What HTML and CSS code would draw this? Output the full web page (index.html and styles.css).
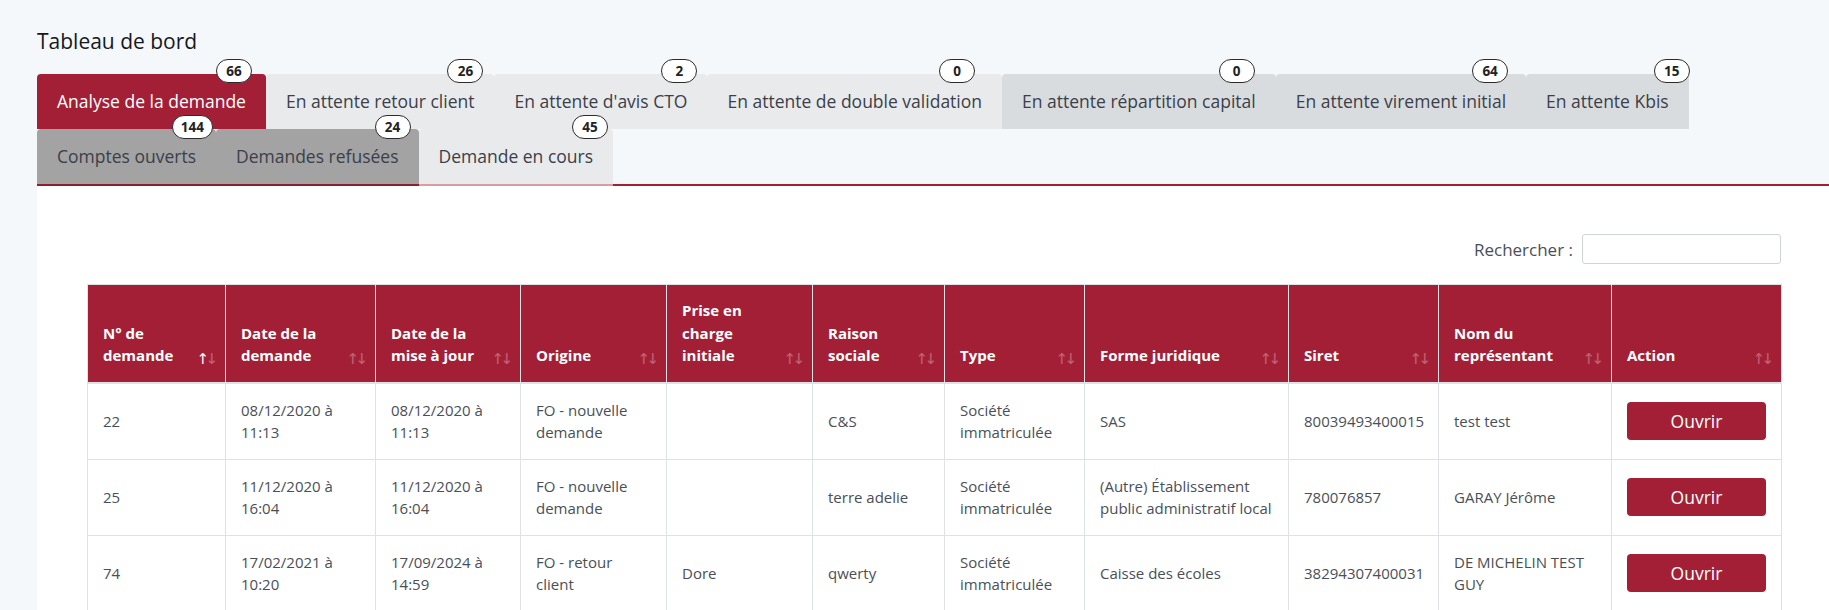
FILE: index.html
```html
<!DOCTYPE html>
<html lang="fr">
<head>
<meta charset="utf-8">
<title>Tableau de bord</title>
<link rel="stylesheet" href="styles.css">
</head>
<body>
<div class="page">
  <h1 class="title">Tableau de bord</h1>
  <nav class="tabs">
    <a class="tab tab-active">Analyse de la demande<span class="badge">66</span></a>
    <a class="tab">En attente retour client<span class="badge">26</span></a>
    <a class="tab">En attente d'avis CTO<span class="badge">2</span></a>
    <a class="tab">En attente de double validation<span class="badge">0</span></a>
    <a class="tab tab-mid">En attente répartition capital<span class="badge">0</span></a>
    <a class="tab tab-mid">En attente virement initial<span class="badge">64</span></a>
    <a class="tab tab-mid">En attente Kbis<span class="badge">15</span></a>
    <a class="tab tab-dark">Comptes ouverts<span class="badge">144</span></a>
    <a class="tab tab-dark">Demandes refusées<span class="badge">24</span></a>
    <a class="tab tab-current">Demande en cours<span class="badge">45</span></a>
  </nav>
  <section class="panel">
    <div class="toolbar">
      <label class="search">Rechercher :<input class="search-input" type="search"></label>
    </div>
    <table class="grid">
      <colgroup>
        <col class="c1"><col class="c2"><col class="c3"><col class="c4"><col class="c5"><col class="c6"><col class="c7"><col class="c8"><col class="c9"><col class="c10"><col class="c11">
      </colgroup>
      <thead>
        <tr>
          <th class="sort sort-asc">N° de demande</th>
          <th class="sort">Date de la demande</th>
          <th class="sort">Date de la mise à jour</th>
          <th class="sort">Origine</th>
          <th class="sort">Prise en charge initiale</th>
          <th class="sort">Raison sociale</th>
          <th class="sort">Type</th>
          <th class="sort">Forme juridique</th>
          <th class="sort">Siret</th>
          <th class="sort">Nom du représentant</th>
          <th class="sort">Action</th>
        </tr>
      </thead>
      <tbody>
        <tr>
          <td>22</td>
          <td>08/12/2020 à 11:13</td>
          <td>08/12/2020 à 11:13</td>
          <td>FO - nouvelle demande</td>
          <td></td>
          <td>C&amp;S</td>
          <td>Société immatriculée</td>
          <td>SAS</td>
          <td>80039493400015</td>
          <td>test test</td>
          <td><button class="btn-open" type="button">Ouvrir</button></td>
        </tr>
        <tr>
          <td>25</td>
          <td>11/12/2020 à 16:04</td>
          <td>11/12/2020 à 16:04</td>
          <td>FO - nouvelle demande</td>
          <td></td>
          <td>terre adelie</td>
          <td>Société immatriculée</td>
          <td>(Autre) Établissement public administratif local</td>
          <td>780076857</td>
          <td>GARAY Jérôme</td>
          <td><button class="btn-open" type="button">Ouvrir</button></td>
        </tr>
        <tr>
          <td>74</td>
          <td>17/02/2021 à 10:20</td>
          <td>17/09/2024 à 14:59</td>
          <td>FO - retour client</td>
          <td>Dore</td>
          <td>qwerty</td>
          <td>Société immatriculée</td>
          <td>Caisse des écoles</td>
          <td>38294307400031</td>
          <td>DE MICHELIN TEST GUY</td>
          <td><button class="btn-open" type="button">Ouvrir</button></td>
        </tr>
      </tbody>
    </table>
  </section>
</div>
</body>
</html>
```
FILE: styles.css
```css
html, body {
  margin: 0;
  padding: 0;
}

body {
  background: #f5f8fb;
  font-family: "Open Sans", "Liberation Sans", sans-serif;
  color: #3b4049;
}

.page {
  padding: 27px 0 0 37px;
}

.title {
  margin: 0 0 19px;
  font-size: 21px;
  font-weight: 400;
  line-height: 28px;
  color: #16181b;
}

.tabs {
  display: flex;
  flex-wrap: wrap;
  align-items: flex-start;
  border-bottom: 2px solid #a31f36;
}

.tab {
  position: relative;
  padding: 15px 20px;
  font-size: 17.5px;
  line-height: 25px;
  white-space: nowrap;
  color: #3b4049;
  background: #e9eaec;
  border-radius: 4px 4px 0 0;
}

.tab-active {
  background: #a31f36;
  color: #fff;
}

.tab-mid {
  background: #d9dcdf;
}

.tab-dark {
  background: #a3a3a3;
  border-bottom: 2px solid #8d1f30;
  margin-bottom: -2px;
}

.tab-current {
  background: #e9eaec;
  border-bottom: 2px solid #dc9ba4;
  margin-bottom: -2px;
}

.badge {
  position: absolute;
  top: -15px;
  right: 12px;
  box-sizing: border-box;
  height: 24px;
  min-width: 36px;
  padding: 0 8px;
  border: 1px solid #2b2b2b;
  border-radius: 12px;
  background: #fff;
  color: #222;
  font-size: 13.5px;
  font-weight: 700;
  line-height: 22px;
  text-align: center;
}

.tab:nth-child(1) .badge { right: 14px; }
.tab:nth-child(2) .badge { right: 11px; }
.tab:nth-child(3) .badge { right: 10px; }
.tab:nth-child(4) .badge { right: 27px; }
.tab:nth-child(5) .badge { right: 21px; }
.tab:nth-child(6) .badge { right: 18px; }
.tab:nth-child(7) .badge { right: -1px; }
.tab:nth-child(8) .badge { right: 3px; top: -14px; }
.tab:nth-child(9) .badge { right: 8px; top: -14px; }
.tab:nth-child(10) .badge { right: 5px; top: -14px; }

.panel {
  background: #fff;
  padding: 48px 48px 40px 50px;
  min-height: 400px;
}

.toolbar {
  display: flex;
  justify-content: flex-end;
  margin-bottom: 20px;
}

.search {
  display: flex;
  align-items: center;
  gap: 9px;
  font-size: 17px;
  color: #4a4f57;
}

.search-input {
  box-sizing: border-box;
  width: 199px;
  height: 30px;
  margin: 0;
  border: 1px solid #ced4da;
  border-radius: 3px;
  background: #fff;
}

.grid {
  width: 100%;
  border-collapse: collapse;
  table-layout: fixed;
  font-size: 15px;
  line-height: 1.5;
  color: #4a4f57;
}

.c1 { width: 138px; }
.c2 { width: 150px; }
.c3 { width: 145px; }
.c4 { width: 146px; }
.c5 { width: 146px; }
.c6 { width: 132px; }
.c7 { width: 140px; }
.c8 { width: 204px; }
.c9 { width: 150px; }
.c10 { width: 173px; }
.c11 { width: 170px; }

.grid th {
  position: relative;
  padding: 14px 30px 15px 15px;
  background: #a31f36;
  color: #fff;
  font-weight: 700;
  text-align: left;
  vertical-align: bottom;
  border: 1px solid #dee2e6;
  border-bottom-width: 2px;
}

.grid th.sort::before,
.grid th.sort::after {
  position: absolute;
  bottom: 15px;
  font-family: "DejaVu Sans", sans-serif;
  font-size: 15px;
  font-weight: 400;
  line-height: 1;
  opacity: 0.3;
}

.grid th.sort::before {
  content: "\2191";
  right: 16px;
}

.grid th.sort::after {
  content: "\2193";
  right: 7px;
}

.grid th.sort-asc::before {
  opacity: 1;
}

.grid td {
  padding: 15px;
  border: 1px solid #dee2e6;
  vertical-align: middle;
}

.btn-open {
  display: block;
  width: 100%;
  height: 38px;
  padding: 0;
  border: 0;
  border-radius: 4px;
  background: #a31f36;
  color: #fff;
  font-family: "Open Sans", "Liberation Sans", sans-serif;
  font-size: 17.5px;
  cursor: pointer;
}
```
